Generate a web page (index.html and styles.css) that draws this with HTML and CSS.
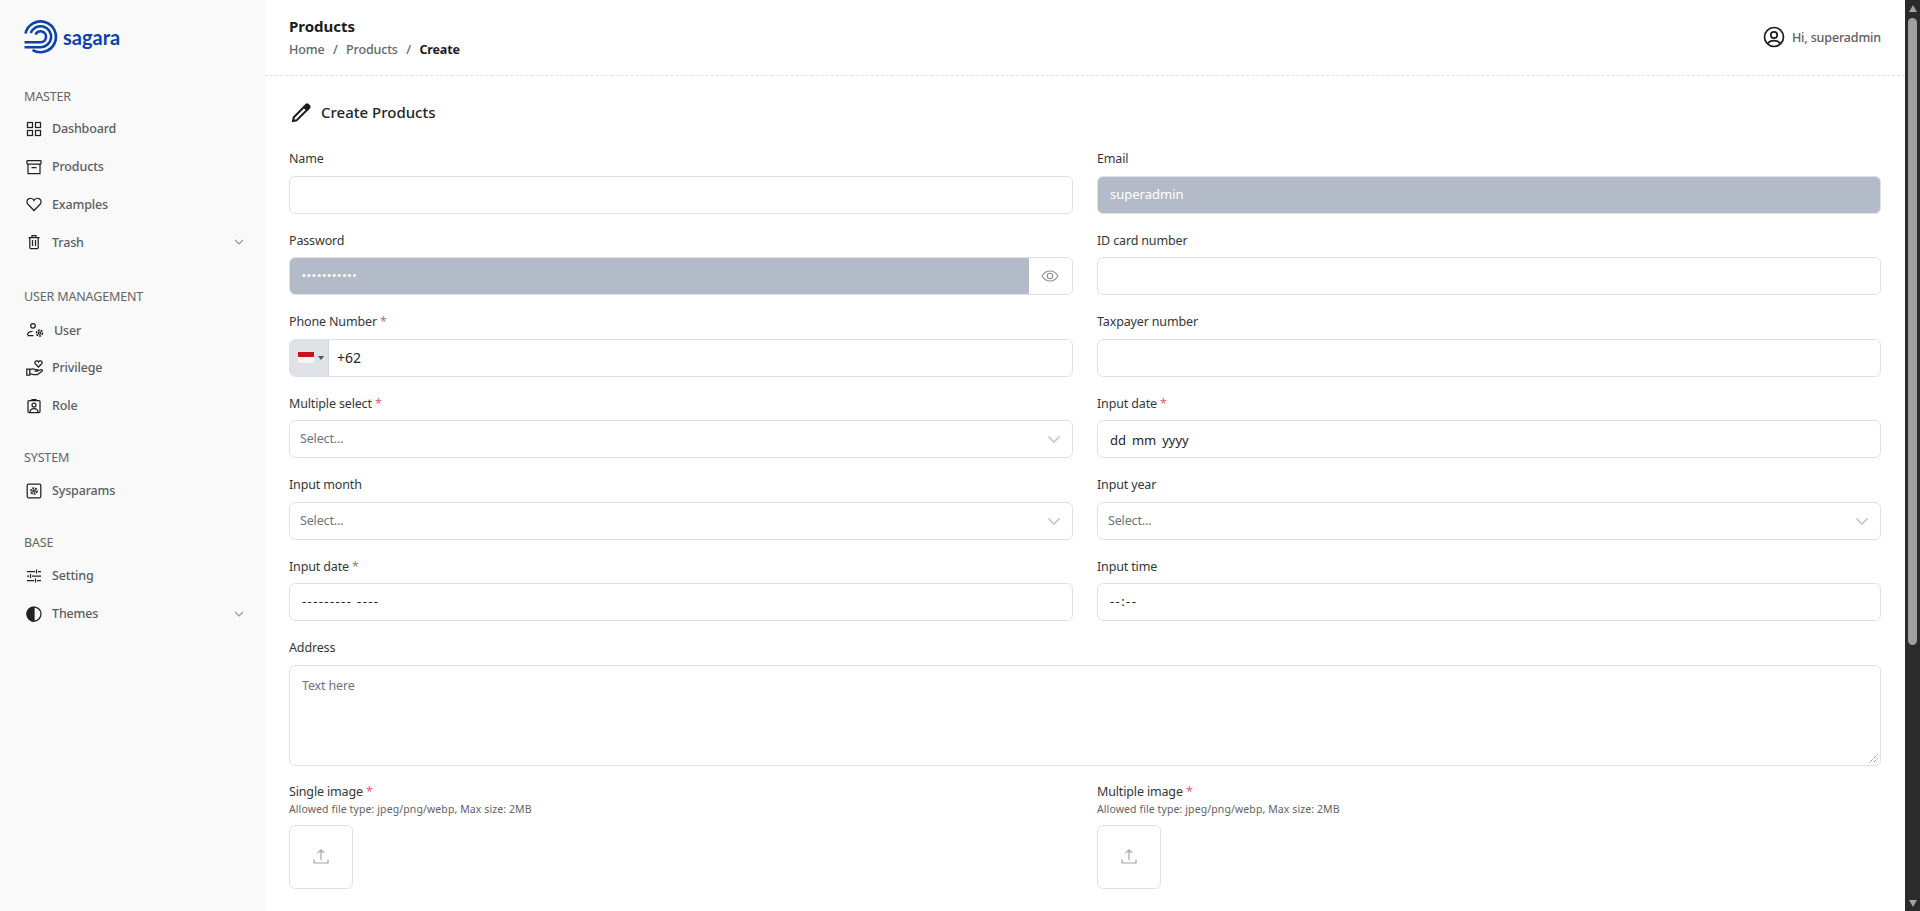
FILE: index.html
```html
<!DOCTYPE html>
<html lang="en">
<head>
    <meta charset="UTF-8">
    <title>Create Products</title>
    <link rel="stylesheet" href="styles.css">
</head>
<body>
<div class="app">
    <aside class="sidebar">
        <div class="logo">
            <svg width="34" height="34" viewBox="0 0 34 34" fill="none" stroke="#0b42ae" stroke-width="2.600">
                <path d="M1.500 13.500A15.400 15.400 0 1 1 8.500 30"/>
                <path d="M6.800 13A10.500 10.500 0 1 1 16.700 27.200H.5"/>
                <path d="M11.500 14.500A5.500 5.500 0 1 1 16.700 22.200H.5"/>
            </svg>
            <span class="logo-text">sagara</span>
        </div>

        <div class="menu-title first">MASTER</div>
        <a class="menu-item">
            <svg class="icon" viewBox="0 0 16 16"><rect x="1.500" y="1.500" width="5" height="5"/><rect x="9.500" y="1.500" width="5" height="5"/><rect x="1.500" y="9.500" width="5" height="5"/><rect x="9.500" y="9.500" width="5" height="5"/></svg>
            <span>Dashboard</span>
        </a>
        <a class="menu-item">
            <svg class="icon" viewBox="0 0 16 16"><rect x="1" y="1.500" width="14" height="3.500" rx=".5"/><path d="M2 5v9.500h12V5M5.500 8.500h5"/></svg>
            <span>Products</span>
        </a>
        <a class="menu-item">
            <svg class="icon" viewBox="0 0 16 16"><path d="M8 14.500 1.900 8.300C.3 6.600.7 4 2.500 2.900 4.300 1.900 6.800 2.400 8 4.500 9.200 2.400 11.700 1.900 13.500 2.900 15.300 4 15.700 6.600 14.100 8.300Z"/></svg>
            <span>Examples</span>
        </a>
        <a class="menu-item has-sub">
            <svg class="icon" viewBox="0 0 16 16"><path d="M2.500 3.500h11M6 3.500V1.500h4v2M3.800 3.500v10a1 1 0 0 0 1 1h6.400a1 1 0 0 0 1-1v-10M6.500 6v6M9.500 6v6"/></svg>
            <span>Trash</span>
            <svg class="chevron" viewBox="0 0 12 12"><path d="M2 4l4 4 4-4"/></svg>
        </a>

        <div class="menu-title second">USER MANAGEMENT</div>
        <a class="menu-item">
            <svg class="icon wide" viewBox="0 0 18 16"><circle cx="7" cy="3.800" r="2.300"/><path d="M1.500 13c0-2.300 2-3.500 5-3.700M1.500 13.500h6"/><circle cx="13.500" cy="11" r="1.200"/><circle cx="13.500" cy="11" r="3" stroke-width="1.500" stroke-dasharray="2 1"/></svg>
            <span class="user-label">User</span>
        </a>
        <a class="menu-item">
            <svg class="icon wide" viewBox="0 0 18 16"><path d="M12.500 7 9.300 3.800C8.400 2.700 9 1 10.400.8 11.300.7 12.100 1.100 12.500 1.900 12.900 1.100 13.700.7 14.600.8 16 1 16.600 2.700 15.700 3.800Z"/><path d="M.8 9h3v6h-3zM3.800 10c2-1.500 3.500-1.500 5.500-.5h2c1 0 1 1.600 0 1.600H8.500M11.500 11l3.700-1.300c1-.3 1.700.8.800 1.500l-4.500 3.300H7.500l-3.700-.8"/></svg>
            <span>Privilege</span>
        </a>
        <a class="menu-item">
            <svg class="icon" viewBox="0 0 16 16"><rect x="2" y="2.500" width="12" height="12" rx="1"/><path d="M6 2.500v-1h4v1"/><circle cx="8" cy="7" r="2"/><path d="M4 14.500c0-3 1.500-4 4-4s4 1 4 4"/></svg>
            <span>Role</span>
        </a>

        <div class="menu-title">SYSTEM</div>
        <a class="menu-item">
            <svg class="icon" viewBox="0 0 16 16"><rect x="1.200" y="1.200" width="13.600" height="13.600" rx="1.200"/><circle cx="8" cy="8" r="1.200"/><circle cx="8" cy="8" r="3" stroke-width="1.600" stroke-dasharray="2 1"/></svg>
            <span>Sysparams</span>
        </a>

        <div class="menu-title">BASE</div>
        <a class="menu-item">
            <svg class="icon" viewBox="0 0 16 16"><path d="M1 3.500h8M12 3.500h3M1 8h2M6 8h9M1 12.500h7M11 12.500h4M10.500 1.500v4M4.500 6v4M9.500 10.500v4"/></svg>
            <span>Setting</span>
        </a>
        <a class="menu-item has-sub">
            <svg class="icon" viewBox="0 0 16 16"><circle cx="8" cy="8" r="7"/><path class="fill" d="M8 1a7 7 0 0 0 0 14Z"/></svg>
            <span>Themes</span>
            <svg class="chevron" viewBox="0 0 12 12"><path d="M2 4l4 4 4-4"/></svg>
        </a>
    </aside>

    <div class="main">
        <header class="topbar">
            <div>
                <div class="page-title">Products</div>
                <div class="breadcrumb">
                    <span>Home</span><i>/</i><span>Products</span><i>/</i><b>Create</b>
                </div>
            </div>
            <div class="profile">
                <svg width="22" height="22" viewBox="0 0 22 22" fill="none" stroke="#1c1c1c" stroke-width="1.700"><circle cx="11" cy="11" r="9.500"/><circle cx="11" cy="9" r="3.200"/><path d="M4.800 17.500c1.500-2.200 3.500-2.800 6.200-2.800s4.700.6 6.200 2.800"/></svg>
                <span>Hi, superadmin</span>
            </div>
        </header>

        <main class="content">
            <h1 class="form-title">
                <svg width="20" height="20" viewBox="0 0 20 20" fill="none" stroke="#1c1c1c" stroke-width="2"><path d="M5.800 17.200 2 18l.8-3.800L13 4l3 3Z"/><path fill="#1c1c1c" d="M13.500 3.500 15.200 1.800a1.300 1.300 0 0 1 1.800 0L18.200 3a1.300 1.300 0 0 1 0 1.800L16.500 6.500Z"/></svg>
                Create Products
            </h1>

            <form class="form-grid">
                <div class="field">
                    <label>Name</label>
                    <div class="input"></div>
                </div>
                <div class="field">
                    <label>Email</label>
                    <div class="input disabled">superadmin</div>
                </div>

                <div class="field">
                    <label>Password</label>
                    <div class="input password">
                        <div class="password-value">•••••••••••</div>
                        <div class="eye">
                            <svg width="18" height="18" viewBox="0 0 18 18" fill="none" stroke="#8f8f8f" stroke-width="1.100"><path d="M1 9c2-3.400 4.800-5 8-5s6 1.600 8 5c-2 3.400-4.800 5-8 5s-6-1.600-8-5Z"/><circle cx="9" cy="9" r="2.700"/></svg>
                        </div>
                    </div>
                </div>
                <div class="field">
                    <label>ID card number</label>
                    <div class="input"></div>
                </div>

                <div class="field">
                    <label>Phone Number <em>*</em></label>
                    <div class="input phone">
                        <div class="flag-box">
                            <span class="flag"></span>
                            <span class="caret"></span>
                        </div>
                        <span class="phone-code">+62</span>
                    </div>
                </div>
                <div class="field">
                    <label>Taxpayer number</label>
                    <div class="input"></div>
                </div>

                <div class="field">
                    <label>Multiple select <em>*</em></label>
                    <div class="input select">
                        <span>Select...</span>
                        <svg viewBox="0 0 20 20"><path d="M4.500 7.500 10 13l5.500-5.500"/></svg>
                    </div>
                </div>
                <div class="field">
                    <label>Input date <em>*</em></label>
                    <div class="input date">dd&nbsp; mm&nbsp; yyyy</div>
                </div>

                <div class="field">
                    <label>Input month</label>
                    <div class="input select">
                        <span>Select...</span>
                        <svg viewBox="0 0 20 20"><path d="M4.500 7.500 10 13l5.500-5.500"/></svg>
                    </div>
                </div>
                <div class="field">
                    <label>Input year</label>
                    <div class="input select">
                        <span>Select...</span>
                        <svg viewBox="0 0 20 20"><path d="M4.500 7.500 10 13l5.500-5.500"/></svg>
                    </div>
                </div>

                <div class="field">
                    <label>Input date <em>*</em></label>
                    <div class="input dashes">--------- ----</div>
                </div>
                <div class="field">
                    <label>Input time</label>
                    <div class="input dashes">--:--</div>
                </div>

                <div class="field wide">
                    <label>Address</label>
                    <div class="textarea">
                        Text here
                        <svg class="resize" width="9" height="9" viewBox="0 0 9 9"><path d="M8.500 .5 .5 8.500M8.500 4.500l-4 4"/></svg>
                    </div>
                </div>

                <div class="field">
                    <label class="tight">Single image <em>*</em></label>
                    <small>Allowed file type: jpeg/png/webp, Max size: 2MB</small>
                    <div class="upload">
                        <svg width="18" height="18" viewBox="0 0 18 18" fill="none" stroke="#a6a6a6" stroke-width="1.200"><path d="M9 12V2M5.800 5 9 1.800 12.200 5M2 11.500v3.500h14v-3.500"/></svg>
                    </div>
                </div>
                <div class="field">
                    <label class="tight">Multiple image <em>*</em></label>
                    <small>Allowed file type: jpeg/png/webp, Max size: 2MB</small>
                    <div class="upload">
                        <svg width="18" height="18" viewBox="0 0 18 18" fill="none" stroke="#a6a6a6" stroke-width="1.200"><path d="M9 12V2M5.800 5 9 1.800 12.200 5M2 11.500v3.500h14v-3.500"/></svg>
                    </div>
                </div>
            </form>
        </main>
    </div>

    <div class="scrollbar">
        <span class="arrow-up"></span>
        <span class="thumb"></span>
        <span class="arrow-down"></span>
    </div>
</div>
</body>
</html>
```

FILE: styles.css
```css
* {
    box-sizing: border-box;
}

html, body {
    margin: 0;
    height: 100%;
    overflow: hidden;
}

body {
    font-family: "Noto Sans", "Open Sans", sans-serif;
    font-size: 12.500px;
    letter-spacing: -.15px;
    line-height: 19.500px;
    color: #212529;
    background: #fff;
}

.app {
    display: flex;
    height: 911px;
}

/* sidebar */
.sidebar {
    width: 265px;
    flex: none;
    background: #f9f9f9;
    padding: 20px 20px 0 24px;
}

.logo {
    display: flex;
    align-items: center;
    gap: 5px;
    height: 34px;
    margin-bottom: 33px;
}

.logo-text {
    font-family: "Lato", sans-serif;
    font-size: 20px;
    font-weight: 700;
    letter-spacing: 0;
    color: #0b42ae;
    line-height: 1;
}

.menu-title {
    margin: 23.300px 0 4.500px;
    height: 19.500px;
    color: #62666b;
}

.menu-title.first {
    margin-top: 0;
    margin-bottom: 3.500px;
}

.menu-title.second {
    margin-top: 26.300px;
}

.menu-item {
    display: flex;
    align-items: center;
    height: 37.800px;
    padding-left: 2px;
    color: #5a5e63;
    font-weight: 500;
    gap: 10px;
}

.icon {
    width: 16px;
    height: 16px;
    flex: none;
    fill: none;
    stroke: #222;
    stroke-width: 1.250;
}

.icon.wide {
    width: 18px;
    margin-right: -2px;
}

.icon .fill {
    fill: #222;
}

.user-label {
    margin-left: 2px;
}

.chevron {
    width: 12px;
    height: 12px;
    margin-left: auto;
    fill: none;
    stroke: #9a9a9a;
    stroke-width: 1.200;
}

/* top bar */
.main {
    flex: 1;
    min-width: 0;
    display: flex;
    flex-direction: column;
}

.topbar {
    display: flex;
    justify-content: space-between;
    align-items: center;
    height: 76px;
    flex: none;
    padding: 0 24px;
    border-bottom: 1px dashed #e2e2e2;
}

.page-title {
    font-size: 15px;
    font-weight: 700;
    letter-spacing: 0;
    line-height: 22px;
    margin-bottom: 2px;
    color: #1c1c1c;
}

.breadcrumb {
    color: #62666b;
    font-weight: 500;
    line-height: 22px;
}

.breadcrumb i {
    font-style: normal;
    margin: 0 8.500px;
}

.breadcrumb b {
    color: #1c1c1c;
}

.profile {
    display: flex;
    align-items: center;
    gap: 7px;
    color: #5a5e63;
    font-weight: 500;
    margin-top: -2px;
}

.profile span {
    margin-top: 2px;
}

/* form */
.content {
    flex: 1;
    padding: 0 24px;
    box-shadow: inset 8px 0 8px -8px rgba(0, 0, 0, .04);
}

.form-title {
    display: flex;
    align-items: center;
    gap: 10px;
    height: 72px;
    margin: 0;
    padding-top: 2px;
    font-size: 15px;
    font-weight: 500;
    letter-spacing: 0;
    color: #212529;
}

.form-title svg {
    margin-left: 2px;
}

.form-grid {
    display: grid;
    grid-template-columns: 1fr 1fr;
    column-gap: 24px;
    row-gap: 16px;
}

.field {
    min-width: 0;
}

.field.wide {
    grid-column: 1 / 3;
}

.field label {
    display: block;
    height: 19.500px;
    line-height: 21.500px;
    margin-bottom: 8px;
    color: #33373b;
}

.field label.tight {
    line-height: 19.500px;
    margin-bottom: 0;
}

.field em {
    font-style: normal;
    font-size: 12.500px;
    color: #e35d6a;
}

.field small {
    display: block;
    font-size: 10.500px;
    letter-spacing: .1px;
    line-height: 16px;
    color: #5f6368;
    margin-bottom: 8px;
}

.input {
    display: flex;
    align-items: center;
    height: 38px;
    padding: 0 12px;
    background: #fff;
    border: 1px solid #dee2e6;
    border-radius: 6px;
    overflow: hidden;
    color: #212529;
}

.input.disabled {
    background: #b4bbc8;
    color: #fff;
    font-size: 13px;
    letter-spacing: 0;
}

.input.date {
    font-size: 13px;
    letter-spacing: 0;
    word-spacing: -.4px;
    padding-top: 3px;
}

.input.dashes {
    font-size: 13px;
    letter-spacing: 1.400px;
}

.input.password {
    padding: 0;
}

.password-value {
    flex: 1;
    align-self: stretch;
    display: flex;
    align-items: center;
    padding: 0 12px;
    background: #b4bbc8;
    color: #fff;
    font-family: "Liberation Sans", sans-serif;
    font-size: 11px;
    letter-spacing: 1.200px;
}

.eye {
    display: flex;
    align-items: center;
    justify-content: center;
    width: 43px;
    padding-right: 2px;
}

.input.phone {
    padding: 0;
}

.flag-box {
    display: flex;
    align-items: center;
    gap: 4px;
    width: 39px;
    align-self: stretch;
    padding-left: 8px;
    background: #dee2e6;
    border-right: 1px solid #ced4da;
}

.flag {
    width: 16px;
    height: 11px;
    background: linear-gradient(#c8121e 50%, #f4f4f4 50%);
}

.caret {
    width: 0;
    height: 0;
    border-left: 3px solid transparent;
    border-right: 3px solid transparent;
    border-top: 4px solid #555;
}

.phone-code {
    margin-left: 8px;
    font-size: 14px;
    letter-spacing: 0;
}

.input.select {
    justify-content: space-between;
    padding: 0 8px 0 10px;
    color: #6c757d;
}

.input.select svg {
    width: 20px;
    height: 20px;
    fill: none;
    stroke: #c4c4c4;
    stroke-width: 1.600;
}

.textarea {
    position: relative;
    height: 101px;
    padding: 10px 12px;
    border: 1px solid #dee2e6;
    border-radius: 6px;
    color: #6c757d;
}

.resize {
    position: absolute;
    right: 2px;
    bottom: 2px;
    fill: none;
    stroke: #555;
    stroke-width: 1;
    stroke-dasharray: 1 1;
}

.upload {
    display: flex;
    align-items: center;
    justify-content: center;
    width: 64px;
    height: 64px;
    border: 1px solid #dee2e6;
    border-radius: 6px;
}

/* scrollbar drawn by hand, the page itself does not scroll here */
.scrollbar {
    width: 15px;
    flex: none;
    display: flex;
    flex-direction: column;
    align-items: center;
    padding: 5px 0 4px;
    background: #2b2b2b;
}

.arrow-up, .arrow-down {
    width: 0;
    height: 0;
    border-left: 4px solid transparent;
    border-right: 4px solid transparent;
}

.arrow-up {
    border-bottom: 7px solid #a3a3a3;
}

.arrow-down {
    border-top: 7px solid #a3a3a3;
    margin-top: auto;
}

.thumb {
    width: 9px;
    height: 627px;
    margin-top: 6px;
    background: #9f9f9f;
    border-radius: 5px;
}
```
